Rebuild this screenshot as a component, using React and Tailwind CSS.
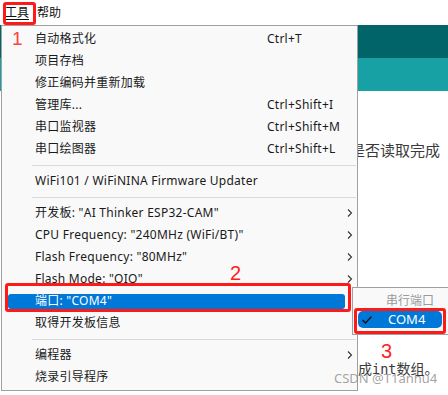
import React from 'react'

const FONT = "font-['Noto_Sans','Noto_Sans_CJK_SC',sans-serif]"

const ITEMS = [
  { label: '自动格式化', key: 'Ctrl+T' },
  { label: '项目存档' },
  { label: '修正编码并重新加载' },
  { label: '管理库...', key: 'Ctrl+Shift+I' },
  { label: '串口监视器', key: 'Ctrl+Shift+M' },
  { label: '串口绘图器', key: 'Ctrl+Shift+L' },
  'sep',
  { label: 'WiFi101 / WiFiNINA Firmware Updater' },
  'sep',
  { label: '开发板: "AI Thinker ESP32-CAM"', sub: true },
  { label: 'CPU Frequency: "240MHz (WiFi/BT)"', sub: true },
  { label: 'Flash Frequency: "80MHz"', sub: true },
  { label: 'Flash Mode: "QIO"', sub: true },
  { label: '端口: "COM4"', active: true },
  { label: '取得开发板信息' },
  'sep',
  { label: '编程器', sub: true },
  { label: '烧录引导程序' },
]

function Chevron() {
  return (
    <svg width="6" height="10" viewBox="0 0 6 10" className="block">
      <path d="M1 1.5 L4.5 5 L1 8.5" fill="none" stroke="#333" strokeWidth="1.1" />
    </svg>
  )
}

function MenuRow({ item }) {
  if (item.active) {
    return (
      <div className="h-[22px] flex items-center">
        <div className="ml-[6px] w-[337px] h-[15px] bg-[#0078d7] rounded-[3px] flex items-center pl-[27px] text-white">
          {item.label}
        </div>
      </div>
    )
  }
  return (
    <div className="h-[22px] flex items-center text-[#1a1a1a]">
      <span className="pl-[33px] w-[265px] shrink-0 whitespace-nowrap">{item.label}</span>
      {item.key && <span className="whitespace-nowrap">{item.key}</span>}
      {item.sub && (
        <span className="ml-auto mr-[4px]">
          <Chevron />
        </span>
      )}
    </div>
  )
}

export default function App() {
  return (
    <div className={`relative w-[448px] h-[395px] overflow-hidden bg-white ${FONT} text-[12px]`}>
      {/* menu bar */}
      <div className="h-[25px] flex items-center pl-[5px] gap-[8px] text-[#111]">
        <span className="underline underline-offset-[2px]">工具</span>
        <span>帮助</span>
      </div>

      {/* page behind the menu */}
      <div className="h-[33px] bg-[#006468]" />
      <div className="h-[33px] bg-[#17a1a5]" />
      <div className="pl-[350px] mt-[50px] text-[15px] leading-[18px] text-[#3a3a3a] whitespace-nowrap">是否读取完成</div>
      <div className="pl-[344px] mt-[201px] text-[14px] leading-[18px] text-[#3a3a3a] whitespace-nowrap">
        ，成<span className="font-['DejaVu_Sans_Mono',monospace] text-[13.5px]">int</span>数组。
      </div>

      {/* dropdown */}
      <div className="absolute left-[1px] top-[25px] w-[357px] h-[366px] bg-[#f9f9f9] border border-[#a0a0a0] pt-[2px] tracking-[0.25px]">
        {ITEMS.map((it, i) =>
          it === 'sep' ? (
            <div key={i} className="h-[10px] flex items-center">
              <div className="ml-[30px] mr-[1px] flex-1 h-px bg-[#d9d9d9]" />
            </div>
          ) : (
            <MenuRow key={i} item={it} />
          )
        )}
      </div>

      {/* submenu */}
      <div className="absolute left-[352px] top-[287px] w-[110px] h-[48px] bg-[#f9f9f9] border border-[#a0a0a0] pt-[3px]">
        <div className="h-[20px] flex items-center pl-[33px] text-[#9a9a9a]">串行端口</div>
        <div className="ml-[5px] w-[84px] h-[17px] bg-[#0078d7] rounded-[5px] flex items-center">
          <svg width="12" height="10" viewBox="0 0 12 10" className="ml-[3px]">
            <path d="M1.5 5 L4.5 8 L10.5 1.5" fill="none" stroke="#111" strokeWidth="1.3" />
          </svg>
          <span className="ml-[15px] text-white text-[13px]">COM4</span>
        </div>
      </div>

      {/* annotations */}
      <div className="absolute left-[3px] top-[2px] w-[33px] h-[23px] border-[3px] border-[#ff1a1a] rounded-[3px]" />
      <div className="absolute left-[5px] top-[283px] w-[346px] h-[29px] border-[3px] border-[#ff1a1a] rounded-[3px]" />
      <div className="absolute left-[354px] top-[308px] w-[92px] h-[26px] border-[3px] border-[#ff1a1a] rounded-[3px]" />
      <span className="absolute left-[12px] top-[28px] text-[19px] leading-[22px] text-[#ff4040] font-['Liberation_Sans',sans-serif]">1</span>
      <span className="absolute left-[230px] top-[261px] text-[20px] leading-[24px] text-[#ff2020] font-['Liberation_Sans',sans-serif]">2</span>
      <span className="absolute left-[381px] top-[339px] text-[20px] leading-[24px] text-[#ff2020] font-['Liberation_Sans',sans-serif]">3</span>
      <span className="absolute left-[334px] top-[371px] text-[13px] leading-[14px] text-[#8c8c8c]/80 font-['Noto_Sans',sans-serif]">CSDN @T1anhu4</span>
    </div>
  )
}
